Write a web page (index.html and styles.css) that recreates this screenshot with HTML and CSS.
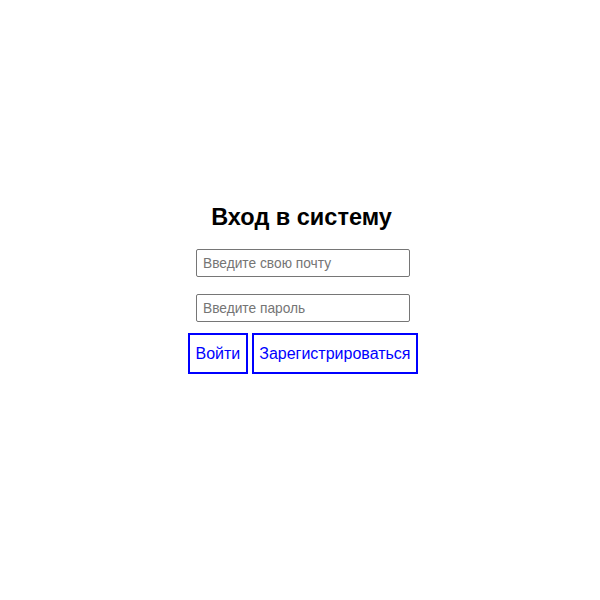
FILE: index.html
```html
<!DOCTYPE html>
<html lang="ru">
<head>
<meta charset="utf-8">
<title>Вход в систему</title>
<link rel="stylesheet" href="styles.css">
</head>
<body>
<main class="login">
  <h2 class="login-title">Вход в систему</h2>
  <form class="login-form">
    <input class="login-input" type="email" placeholder="Введите свою почту">
    <input class="login-input" type="password" placeholder="Введите пароль">
    <div class="login-actions">
      <button class="login-btn" type="submit">Войти</button>
      <button class="login-btn" type="button">Зарегистрироваться</button>
    </div>
  </form>
</main>
</body>
</html>
```

FILE: styles.css
```css
html, body {
  margin: 0;
  padding: 0;
  background: #ffffff;
}
body {
  font-family: "Liberation Sans", Arial, sans-serif;
  color: #000;
}
.login {
  display: flex;
  flex-direction: column;
  align-items: center;
  padding: 203px 0 0 6px;
}
.login-title {
  margin: 0 0 18px -3px;
  font-size: 23.5px;
  font-weight: bold;
  line-height: 28px;
}
.login-form {
  display: flex;
  flex-direction: column;
  align-items: center;
}
.login-input {
  box-sizing: border-box;
  width: 214px;
  height: 28px;
  padding: 0 6px;
  border: 1px solid #767676;
  border-radius: 2px;
  font-family: "Liberation Sans", Arial, sans-serif;
  font-size: 13.75px;
  color: #000;
  background: #fff;
}
.login-input::placeholder {
  color: #757575;
}
.login-input + .login-input {
  margin-top: 17px;
}
.login-actions {
  display: flex;
  gap: 4px;
  margin-top: 11px;
}
.login-btn {
  box-sizing: border-box;
  height: 41px;
  padding: 0 5.5px;
  border: 2px solid #0000ff;
  border-radius: 0;
  background: #fff;
  color: #0000ff;
  font-family: "Liberation Sans", Arial, sans-serif;
  font-size: 16px;
  cursor: pointer;
}
```
